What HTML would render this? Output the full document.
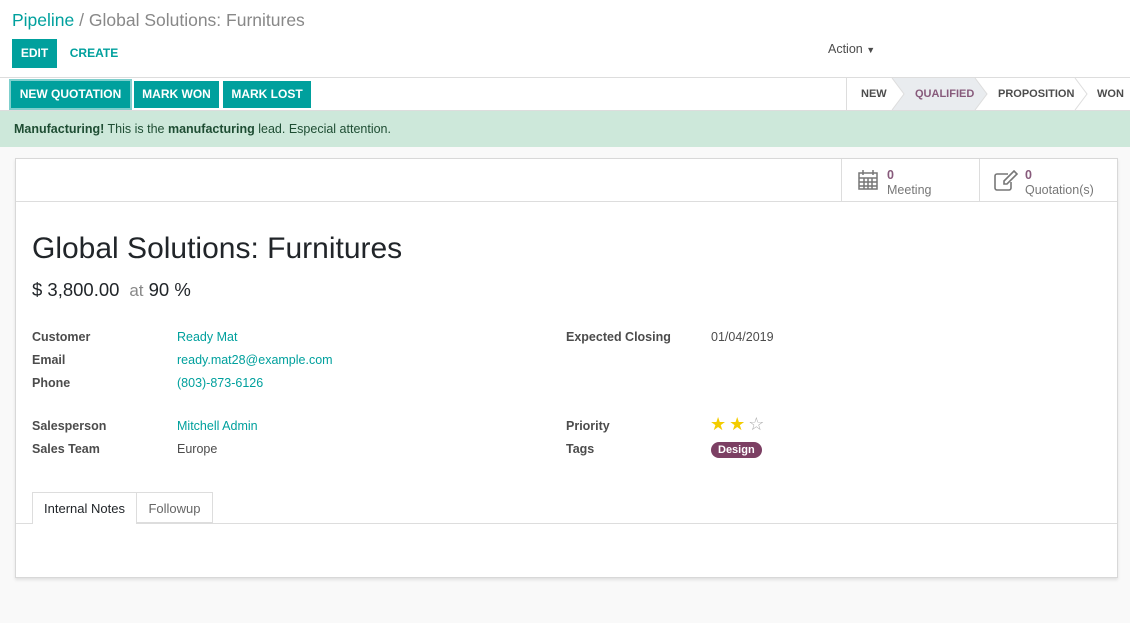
<!DOCTYPE html>
<html><head><meta charset="utf-8"><style>
*{box-sizing:border-box;margin:0;padding:0}
body{width:1130px;height:623px;background:#f9f9f9;font-family:"Liberation Sans",sans-serif;font-size:13px;color:#4c4c4c;position:relative;overflow:hidden}
.top{position:absolute;left:0;top:0;width:1130px;height:78px;background:#fff;border-bottom:1px solid #ddd}
.bc{position:absolute;left:12px;top:10px;font-size:17.5px;color:#888}
.bc a{color:#00a09d}
.btn{position:absolute;height:29px;line-height:29px;font-size:12px;font-weight:bold;color:#fff;background:#00a09d;text-align:center}
.sb{position:absolute;left:0;top:78px;width:1130px;height:33px;background:#fff;border-bottom:1px solid #ddd}
.alert{position:absolute;left:0;top:111px;width:1130px;height:36px;background:#cde8da;color:#1e4d33;padding:11px 14px;font-size:12.5px}
.sheet{position:absolute;left:15px;top:158px;width:1103px;height:420px;background:#fff;border:1px solid #d8d8d8;box-shadow:0 2px 3px rgba(0,0,0,.1)}
.lbl{position:absolute;font-weight:bold;color:#4c4c4c;font-size:12.5px}
.val{position:absolute;font-size:12.5px;color:#00a09d}
.stage{position:absolute;top:0;height:32px;line-height:32px;font-size:11px;font-weight:bold;color:#4c4c4c}
</style></head><body>
<div class="top">
<div class="bc"><a>Pipeline</a> / Global Solutions: Furnitures</div>
<div class="btn" style="left:12px;top:39px;width:45px">EDIT</div>
<div class="btn" style="left:62px;top:39px;width:64px;background:none;color:#00a09d">CREATE</div>
<div style="position:absolute;left:828px;top:42px;font-size:12.5px;color:#4c4c4c">Action <span style="font-size:9px">▼</span></div>
</div>
<div class="sb">
<div class="btn" style="left:11px;top:3px;width:119px;height:27px;line-height:27px;outline:2px solid #7fcfcd">NEW QUOTATION</div>
<div class="btn" style="left:134px;top:3px;width:85px;height:27px;line-height:27px">MARK WON</div>
<div class="btn" style="left:223px;top:3px;width:88px;height:27px;line-height:27px">MARK LOST</div>
<div style="position:absolute;left:846px;top:0;width:1px;height:32px;background:#ddd"></div>
<svg style="position:absolute;left:847px;top:0" width="283" height="32">
<polygon points="45,0 128,0 140,16 128,32 45,32 57,16" fill="#e9ecef"/>
<polyline points="45,0 57,16 45,32" fill="none" stroke="#ddd"/>
<polyline points="128,0 140,16 128,32" fill="none" stroke="#ddd"/>
<polyline points="228,0 240,16 228,32" fill="none" stroke="#ddd"/>
</svg>
<div class="stage" style="left:861px">NEW</div>
<div class="stage" style="left:915px;color:#875a7b">QUALIFIED</div>
<div class="stage" style="left:998px">PROPOSITION</div>
<div class="stage" style="left:1097px">WON</div>
</div>
<div class="alert"><b>Manufacturing!</b> This is the <b>manufacturing</b> lead. Especial attention.</div>
<div class="sheet">
<div style="position:absolute;left:0;top:42px;width:1101px;height:1px;background:#ddd"></div>
<div style="position:absolute;left:825px;top:0;width:1px;height:42px;background:#ddd"></div>
<div style="position:absolute;left:963px;top:0;width:1px;height:42px;background:#ddd"></div>
<svg style="position:absolute;left:842px;top:11px" width="20" height="20" viewBox="0 0 20 20" fill="none" stroke="#777" stroke-width="1.5"><rect x="1" y="3" width="18" height="16"/><line x1="1" y1="8" x2="19" y2="8"/><line x1="1" y1="12" x2="19" y2="12"/><line x1="1" y1="16" x2="19" y2="16"/><line x1="6" y1="8" x2="6" y2="19"/><line x1="10" y1="8" x2="10" y2="19"/><line x1="14" y1="8" x2="14" y2="19"/><line x1="5" y1="0" x2="5" y2="5"/><line x1="15" y1="0" x2="15" y2="5"/></svg>
<div style="position:absolute;left:871px;top:9px;font-size:12.5px;line-height:15px;color:#777"><b style="color:#875a7b">0</b><br>Meeting</div>
<svg style="position:absolute;left:978px;top:11px" width="24" height="22" viewBox="0 0 24 22" fill="none" stroke="#777" stroke-width="1.6"><path d="M14 4H3a2 2 0 0 0-2 2v12a2 2 0 0 0 2 2h12a2 2 0 0 0 2-2v-6"/><path d="M20 1l3 3-10 10H10v-3z"/></svg>
<div style="position:absolute;left:1009px;top:9px;font-size:12.5px;line-height:15px;color:#777"><b style="color:#875a7b">0</b><br>Quotation(s)</div>
<div style="position:absolute;left:16px;top:73px;font-size:30px;color:#212529">Global Solutions: Furnitures</div>
<div style="position:absolute;left:16px;top:120px;font-size:18.5px;color:#212529">$ 3,800.00 <span style="color:#888;font-size:17px">&nbsp;at</span> 90 %</div>
<div class="lbl" style="left:16px;top:171px">Customer</div><div class="val" style="left:161px;top:171px">Ready Mat</div>
<div class="lbl" style="left:16px;top:194px">Email</div><div class="val" style="left:161px;top:194px">ready.mat28@example.com</div>
<div class="lbl" style="left:16px;top:217px">Phone</div><div class="val" style="left:161px;top:217px">(803)-873-6126</div>
<div class="lbl" style="left:16px;top:260px">Salesperson</div><div class="val" style="left:161px;top:260px">Mitchell Admin</div>
<div class="lbl" style="left:16px;top:283px">Sales Team</div><div class="val" style="left:161px;top:283px;color:#4c4c4c">Europe</div>
<div class="lbl" style="left:550px;top:171px">Expected Closing</div><div class="val" style="left:695px;top:171px;color:#4c4c4c">01/04/2019</div>
<div class="lbl" style="left:550px;top:260px">Priority</div>
<div style="position:absolute;left:694px;top:255px;font-size:18px;letter-spacing:3px;color:#f3cc00">★★<span style="color:#aaa">☆</span></div>
<div class="lbl" style="left:550px;top:283px">Tags</div>
<div style="position:absolute;left:695px;top:283px;height:16px;line-height:16px;padding:0 7px;border-radius:9px;background:#7c3f63;color:#fff;font-size:11px;font-weight:bold">Design</div>
<div style="position:absolute;left:0;top:364px;width:1101px;height:1px;background:#ddd"></div>
<div style="position:absolute;left:16px;top:333px;width:105px;height:32px;background:#fff;border:1px solid #ddd;border-bottom:none;line-height:31px;text-align:center;color:#212529">Internal Notes</div>
<div style="position:absolute;left:121px;top:333px;width:76px;height:31px;border:1px solid #ddd;border-left:none;line-height:31px;text-align:center;color:#666">Followup</div>
</div>
</body></html>
